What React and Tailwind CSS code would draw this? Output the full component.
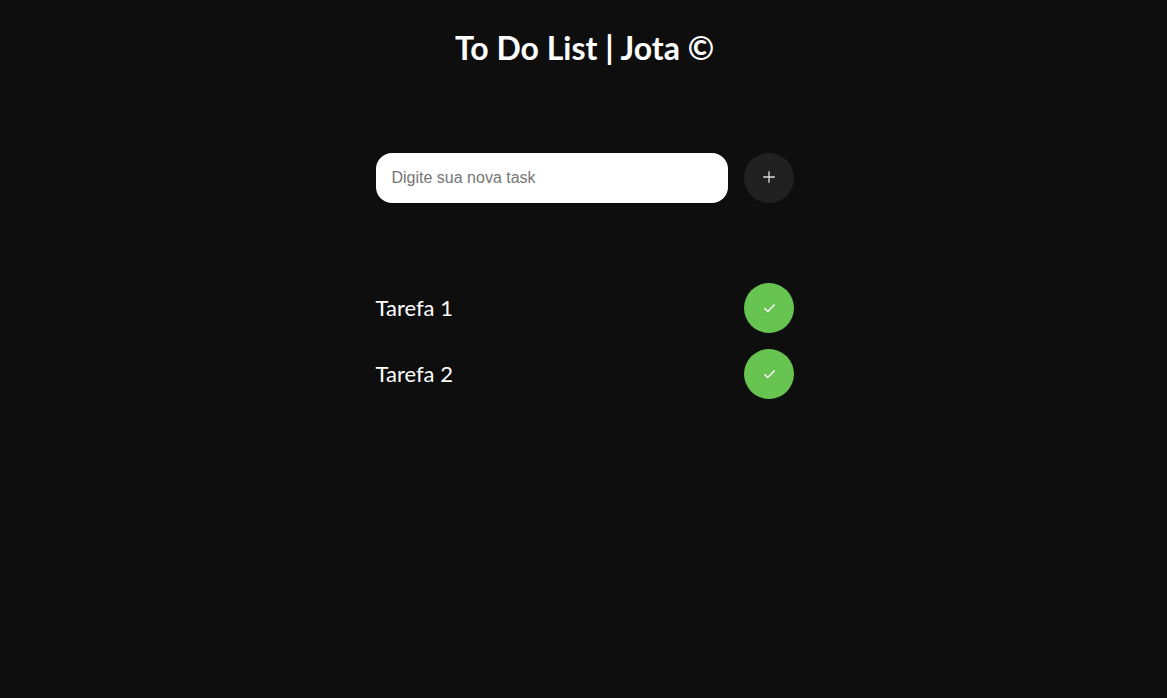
import { useState } from "react";

function RoundButton({ label, className, children, ...props }) {
  return (
    <button
      aria-label={label}
      className={"flex size-[50px] shrink-0 items-center justify-center rounded-full " + className}
      {...props}
    >
      {children}
    </button>
  );
}

export default function App() {
  const [tasks, setTasks] = useState(["Tarefa 1", "Tarefa 2"]);
  const [text, setText] = useState("");

  function addTask(event) {
    event.preventDefault();
    if (!text.trim()) return;
    setTasks([...tasks, text.trim()]);
    setText("");
  }

  return (
    <div className="min-h-screen bg-[#0e0e0e] pt-7 pr-4 pl-[18px] font-['Lato',sans-serif] text-white">
      <h1 className="text-center text-[32px] leading-10 font-bold">To Do List | Jota ©</h1>
      <main className="mx-auto mt-[85px] w-full max-w-[418px]">
        <form onSubmit={addTask} className="flex gap-4">
          <input
            aria-label="Nova task"
            placeholder="Digite sua nova task"
            value={text}
            onChange={(event) => setText(event.target.value)}
            className="h-[50px] min-w-0 flex-1 rounded-2xl bg-white px-4 font-['Liberation_Sans',sans-serif] text-base text-black placeholder:text-[#757575]"
          />
          <RoundButton label="Adicionar" type="submit" className="bg-[#212121] text-[#dddddd]">
            <svg className="size-4" viewBox="0 0 16 16" fill="none" stroke="currentColor" strokeWidth="1.3">
              <path d="M8 1.2v11.6M2.2 7h11.6" />
            </svg>
          </RoundButton>
        </form>
        <ul className="mt-20 flex flex-col gap-4">
          {tasks.map((task, index) => (
            <li key={index} className="flex items-center justify-between gap-4">
              <span className="text-[22px] leading-7">{task}</span>
              <RoundButton
                label={"Concluir " + task}
                type="button"
                className="bg-[#68c451] text-white"
                onClick={() => setTasks(tasks.filter((_, i) => i !== index))}
              >
                <svg className="size-4" viewBox="0 0 16 16" fill="none" stroke="currentColor" strokeWidth="1.4">
                  <path d="M3.4 8.2l3.4 3.3 6.8-6.9" />
                </svg>
              </RoundButton>
            </li>
          ))}
        </ul>
      </main>
    </div>
  );
}
